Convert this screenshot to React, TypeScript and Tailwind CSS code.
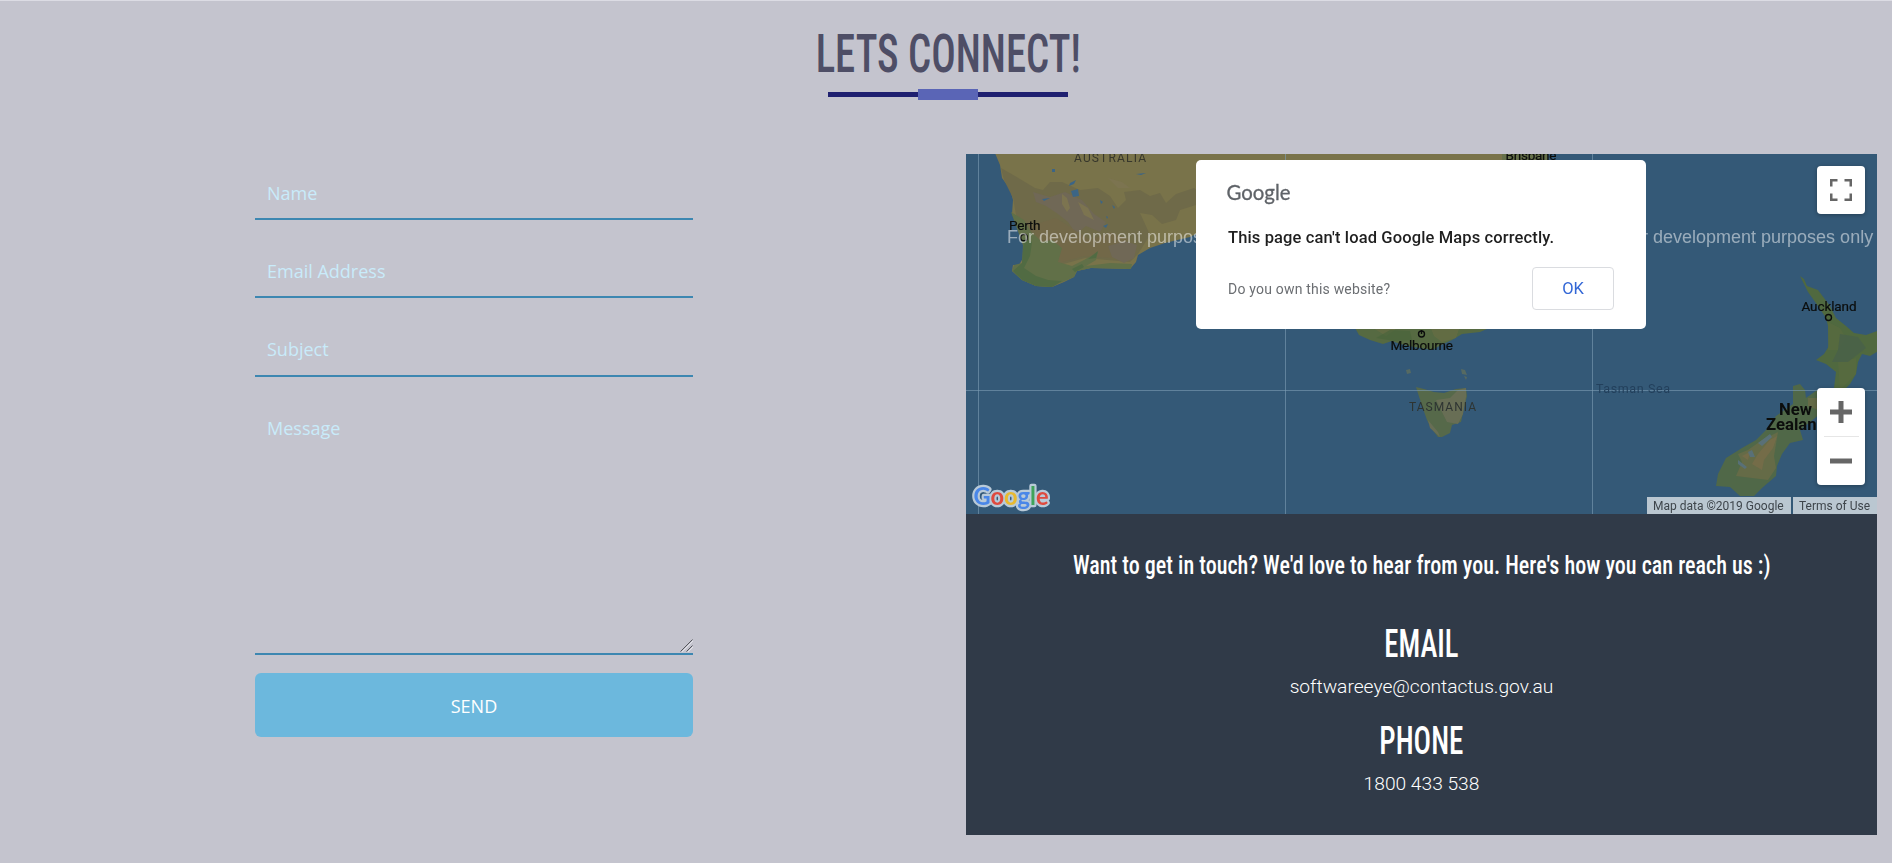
import type { ReactNode } from 'react';

const fieldClass =
  'block w-full border-0 border-b-2 border-[#3d87b1] bg-transparent pl-3 font-["Open_Sans",sans-serif] text-[18px] text-[#c9ebfa] outline-none placeholder:text-[#c9ebfa] placeholder:opacity-100';

function Header() {
  return (
    <header className="flex flex-col items-center pt-5">
      <h1 className='flex h-[66px] scale-x-[0.748] items-center whitespace-nowrap font-["Roboto_Condensed",Roboto,sans-serif] text-[54.5px] font-medium text-[#4e4e66]'>
        LETS CONNECT!
      </h1>
      <div className="mt-[2px] flex h-[11px] w-60 items-center">
        <div className="h-[5px] flex-1 bg-[#1f2070]" />
        <div className="h-[11px] w-[60px] bg-[#5a65b6]" />
        <div className="h-[5px] flex-1 bg-[#1f2070]" />
      </div>
    </header>
  );
}

function ContactForm() {
  return (
    <form className="mx-auto flex w-[438px] flex-col pt-3" onSubmit={(e) => e.preventDefault()}>
      <div className="flex flex-col gap-[24.3px]">
        <input className={`${fieldClass} h-[54px] pt-[2px]`} placeholder="Name" />
        <input className={`${fieldClass} h-[54px] pt-[2px]`} placeholder="Email Address" />
        <input className={`${fieldClass} h-[54px] pt-px`} placeholder="Subject" />
        <div className="relative">
          <textarea className={`${fieldClass} h-[254px] resize-none pt-[14px] leading-[27px]`} placeholder="Message" />
          <svg width="13" height="13" viewBox="0 0 13 13" className="absolute right-0 bottom-[3px]">
            <path d="M1.5 13.5L13.5 1.5M7.5 13.5L13.5 7.5" stroke="#e4e4ea" strokeWidth="1" />
            <path d="M0.5 12.5L12.5 0.5M6.5 12.5L12.5 6.5" stroke="#55565c" strokeWidth="1" />
          </svg>
        </div>
      </div>
      <button className='mt-[18px] h-16 rounded-md bg-[#6cb8dd] pt-[3px] font-["Open_Sans",sans-serif] text-[18px] text-white'>
        SEND
      </button>
    </form>
  );
}

function MapCanvas() {
  return (
    <svg viewBox="966 154 911 360" className="block h-[360px] w-[911px]" fontFamily="Roboto, sans-serif">
      <defs>
        <filter id="terrain" x="-5%" y="-5%" width="110%" height="110%" colorInterpolationFilters="sRGB">
          <feGaussianBlur stdDeviation="0.7" />
        </filter>
      </defs>
      <rect x="966" y="154" width="911" height="360" fill="#345977" />

      <g filter="url(#terrain)">
        {/* Mainland Australia */}
        <path
          fill="#79734a"
          d="M992 146L1000 165L1002 178L1010 189L1013 200L1012 214L1017 224L1020 231L1023 245L1023 258L1019 265L1013 265L1012 271L1022 280L1036 286L1052 287L1064 282L1074 277L1077 271L1091 268L1130 269L1136 262L1138 255L1150 248L1165 243L1190 237L1215 225L1550 225L1552 170L1540 146Z"
        />
        <path
          fill="#6f6a49"
          d="M1001 168L1015 176L1035 188L1043 190L1050 182L1062 182L1080 190L1098 188L1110 196L1118 208L1126 200L1124 192L1140 190L1150 196L1160 193L1166 203L1176 194L1194 188L1200 193L1196 205L1180 210L1176 220L1162 224L1152 215L1140 213L1150 235L1138 254L1130 262L1085 258L1060 265L1045 250L1026 232L1017 220L1013 198L1004 180Z"
        />
        <path
          fill="#706856"
          d="M1033 192L1050 197L1065 192L1082 200L1094 214L1106 222L1100 232L1086 226L1076 234L1068 222L1058 214L1046 206L1036 202ZM1108 246L1122 240L1137 245L1134 258L1124 263L1112 257Z"
        />
        <path fill="#7c7450" d="M1062 194L1067 198L1070 208L1067 212L1062 204ZM1078 202L1088 208L1094 220L1084 215ZM1108 178L1122 182L1130 188L1118 188Z" />
        <path fill="#736849" opacity="0.8" d="M1030 226L1056 218L1090 240L1110 232L1130 240L1108 246L1112 258L1084 256L1062 262L1046 248Z" />
        <path
          fill="#617048"
          d="M1011 212L1024 220L1031 232L1042 242L1052 240L1062 248L1058 262L1072 266L1084 260L1098 252L1096 260L1086 266L1110 263L1132 264L1131 269L1091 268L1077 271L1074 277L1060 283L1052 287L1036 286L1022 280L1012 271L1014 265L1022 263L1023 245Z"
        />
        <path
          fill="#516b43"
          d="M1024 238L1032 242L1030 256L1024 268L1036 276L1048 280L1062 281L1052 287L1036 286L1022 280L1013 271L1022 263ZM1088 259L1098 251L1096 258ZM1072 269L1082 264L1084 267L1075 272Z"
        />
        <path
          fill="#3c6585"
          d="M1052 169h3v3h-3zM1070 183l6-3-2 4-5 2zM1071 191l7-2 1 7-6 1zM1042 199l8-1-6 3zM1100 200l3 2-2 2zM1106 216l2 1-1 2zM1103 226l5-2-2 4zM1112 205l3 2-1 2zM1136 174l10-1-5 2z"
        />
        <rect x="1502" y="146" width="46" height="20" fill="#65704a" />

        {/* Victoria coast */}
        <path
          fill="#566a42"
          d="M1354 326L1359 335L1370 340L1383 344L1392 341L1400 344L1414 347L1432 350L1441 345L1452 340L1462 334L1480 332L1494 326Z"
        />
        <path fill="#686e45" opacity="0.7" d="M1430 326L1460 326L1456 338L1442 342L1434 336ZM1370 326L1400 326L1386 336Z" />
        <path fill="#4a653c" opacity="0.7" d="M1376 338L1390 330L1410 331L1412 340L1394 341Z" />

        {/* Tasmania and Bass Strait islands */}
        <path
          fill="#56694a"
          d="M1416 387L1424 389L1434 392L1444 393L1456 389L1466 388L1467 396L1464 408L1461 422L1452 425L1450 433L1442 437L1438 437L1431 428L1427 420L1422 406Z"
        />
        <path fill="#686e55" d="M1436 400L1450 398L1458 390L1466 388L1466 397L1463 414L1458 424L1447 422L1442 412ZM1428 420L1438 432L1440 437L1430 428Z" />
        <path fill="#566a62" d="M1406 370l4-1 1 4-4 1zM1461 369l4 1 2 5-5-1zM1464 376l3 1-1 3z" />

        {/* New Zealand */}
        <path
          fill="#50693f"
          d="M1800 276L1804 279L1807 286L1818 290L1824 298L1830 306L1836 318L1846 326L1854 333L1866 335L1880 330L1880 350L1870 356L1862 354L1858 362L1856 374L1850 384L1840 394L1834 388L1836 372L1826 364L1816 360L1824 354L1829 346L1828 326L1826 318L1818 306L1808 292Z"
        />
        <path fill="#586a40" opacity="0.8" d="M1828 322L1840 328L1846 338L1838 350L1828 350ZM1838 362L1856 358L1856 374L1840 390Z" />
        <path fill="#49604a" opacity="0.8" d="M1840 334L1858 337L1866 348L1848 362L1832 362L1838 350Z" />
        <path
          fill="#506848"
          d="M1793 386L1800 384L1805 390L1806 398L1817 390L1825 398L1820 414L1800 430L1803 440L1790 443L1782 454L1777 466L1776 476L1762 488L1754 496L1740 496L1730 487L1716 486L1718 474L1726 458L1742 448L1756 440L1766 430L1776 416L1793 404Z"
        />
        <path fill="#656b47" d="M1762 440L1778 432L1776 444L1774 456L1776 468L1768 480L1752 478L1736 476L1742 462L1738 454L1748 450ZM1808 398L1818 398L1818 410L1808 406Z" />
        <path fill="#7a6c49" opacity="0.7" d="M1770 440L1777 436L1773 448L1764 460L1762 470L1752 464L1758 454ZM1742 456L1750 452L1748 460Z" />
        <path fill="#58717c" opacity="0.9" d="M1758 443L1770 434L1772 437L1762 446ZM1748 452L1752 450L1755 457L1750 457ZM1738 460L1747 467L1745 469L1738 464Z" />
      </g>

      {/* Graticule */}
      <path d="M978.5 154V514M1285.5 154V514M1592.5 154V514M966 390.5H1877" fill="none" stroke="#7f9fb5" strokeOpacity="0.6" />

      {/* Place labels */}
      <g fontSize="12" fill="#37372c">
        <text x="1074" y="162" textLength="72">AUSTRALIA</text>
        <text x="1409" y="411" textLength="67" fill="#2e3432">TASMANIA</text>
      </g>
      <text x="1596" y="393" fontSize="12.5" textLength="74" fill="#23405c">Tasman Sea</text>
      <g fontSize="13.5" fill="#0b0d0c" stroke="#0b0d0c" strokeWidth="0.2">
        <text x="1009" y="230" textLength="31.5">Perth</text>
        <text x="1505.5" y="159.5" textLength="51">Brisbane</text>
        <text x="1390.5" y="350" textLength="62.5">Melbourne</text>
        <text x="1801.5" y="311" textLength="55">Auckland</text>
      </g>
      <g fontSize="16" fontWeight="700" fill="#0b0d0c">
        <text x="1779" y="415" textLength="33" lengthAdjust="spacingAndGlyphs">New</text>
        <text x="1766" y="430" textLength="60" lengthAdjust="spacingAndGlyphs">Zealand</text>
      </g>
      <g fill="none" stroke="#0b0d0c" strokeWidth="1.4">
        <circle cx="1024" cy="237.5" r="3.3" />
        <circle cx="1421.5" cy="334" r="3" />
        <path d="M1421.5 330v4" />
        <circle cx="1828.5" cy="317.5" r="3" />
      </g>

      {/* Watermark */}
      <g fontFamily="Liberation Sans, Arial, sans-serif" fontSize="18" fill="#ffffff" fillOpacity="0.5">
        <text x="1007" y="243">For development purposes only</text>
        <text x="1621" y="243">For development purposes only</text>
      </g>
    </svg>
  );
}

function MapOverlay({ className, children }: { className: string; children: ReactNode }) {
  return <div className={`absolute ${className}`}>{children}</div>;
}

function MapDialog() {
  return (
    <div className="h-[169px] w-[450px] rounded-[5px] bg-white px-8 font-[Roboto,sans-serif]">
      <div className="flex h-[66px] items-center">
        <svg width="68" height="30" viewBox="0 0 68 30" className="-ml-1">
          <text x="2.5" y="21.5" fontFamily="Lato, sans-serif" fontSize="20.5" fill="#5f6368" stroke="#5f6368" strokeWidth="0.3" textLength="64" lengthAdjust="spacingAndGlyphs">
            Google
          </text>
        </svg>
      </div>
      <p className="h-6 whitespace-nowrap text-[16.5px] leading-6 font-medium tracking-[0.13px] text-[#1f1f1f]">
        This page can't load Google Maps correctly.
      </p>
      <div className="mt-[17px] flex h-[43px] items-center justify-between">
        <span className="pt-[2px] text-[14px] tracking-[0.2px] text-[#6b6e72]">Do you own this website?</span>
        <button className="h-[43px] w-[82px] rounded border border-[#dadce0] pt-px text-[16.5px] text-[#3367d6]">OK</button>
      </div>
    </div>
  );
}

function GoogleLogo() {
  return (
    <svg width="84" height="32" viewBox="0 0 84 32" className="block">
      <g fontFamily="Lato, sans-serif" fontSize="24.5" fontWeight="700">
        <text x="4.5" y="23.5" textLength="75" lengthAdjust="spacingAndGlyphs" fill="#b9cad8" stroke="#b9cad8" strokeWidth="4.5" strokeLinejoin="round">
          Google
        </text>
        <text x="4.5" y="23.5" textLength="75" lengthAdjust="spacingAndGlyphs">
          <tspan fill="#4a87e8">G</tspan>
          <tspan fill="#df4a3e">o</tspan>
          <tspan fill="#e8b92f">o</tspan>
          <tspan fill="#4a87e8">g</tspan>
          <tspan fill="#3fa35a">l</tspan>
          <tspan fill="#df4a3e">e</tspan>
        </text>
      </g>
    </svg>
  );
}

function MapPanel() {
  return (
    <div className="relative h-[360px] w-full overflow-hidden">
      <MapCanvas />
      <MapOverlay className="top-[6px] left-[230px]">
        <MapDialog />
      </MapOverlay>
      <MapOverlay className="top-3 right-3">
        <button className="flex size-12 items-center justify-center rounded-sm bg-white shadow-[0_1px_4px_rgba(0,0,0,0.3)]">
          <svg width="22" height="22" viewBox="0 0 22 22" className="block">
            <path d="M1.25 7.5V1.25H7.5M14.5 1.25H20.75V7.5M20.75 14.5V20.75H14.5M7.5 20.75H1.25V14.5" fill="none" stroke="#666" strokeWidth="2.5" />
          </svg>
        </button>
      </MapOverlay>
      <MapOverlay className="right-3 bottom-[29px]">
        <div className="flex h-[97px] w-12 flex-col items-center rounded-sm bg-white shadow-[0_1px_4px_rgba(0,0,0,0.3)]">
          <button className="flex h-12 w-full items-center justify-center">
            <svg width="22" height="22" viewBox="0 0 22 22" className="block">
              <path d="M0 11H22M11 0V22" stroke="#666" strokeWidth="5" />
            </svg>
          </button>
          <div className="h-px w-[35px] bg-[#e6e6e6]" />
          <button className="flex h-12 w-full items-center justify-center">
            <svg width="22" height="22" viewBox="0 0 22 22" className="block">
              <path d="M0 11H22" stroke="#666" strokeWidth="5" />
            </svg>
          </button>
        </div>
      </MapOverlay>
      <MapOverlay className="bottom-[1px] left-[3px]">
        <GoogleLogo />
      </MapOverlay>
      <MapOverlay className="right-0 bottom-0">
        <div className="flex h-[17px] gap-[2px] font-[Roboto,sans-serif] text-[12px] leading-[18px] whitespace-nowrap text-[#3e454b]">
          <span className="w-36 bg-[#bac7d1] pl-[6px]">Map data ©2019 Google</span>
          <span className="w-[84px] bg-[#bac7d1] pl-[6px]">Terms of Use</span>
        </div>
      </MapOverlay>
    </div>
  );
}

function ContactDetails() {
  return (
    <div className="flex h-[321px] flex-col items-center bg-[#303a48] pt-[25px] font-[Roboto,sans-serif] text-white">
      <p className='h-[52px] scale-x-[0.849] whitespace-nowrap font-["Roboto_Condensed",Roboto,sans-serif] text-[26px] leading-[52px] font-medium'>
        Want to get in touch? We'd love to hear from you. Here's how you can reach us :)
      </p>
      <h2 className='mt-[27px] h-[53px] scale-x-[0.735] font-["Roboto_Condensed",Roboto,sans-serif] text-[39px] leading-[53px] font-medium'>
        EMAIL
      </h2>
      <p className="h-8 text-[19.2px] leading-8 font-light">softwareeye@contactus.gov.au</p>
      <h2 className='mt-3 h-[53px] scale-x-[0.745] font-["Roboto_Condensed",Roboto,sans-serif] text-[39px] leading-[53px] font-medium'>
        PHONE
      </h2>
      <p className="h-8 text-[19.2px] leading-8 font-light">1800 433 538</p>
    </div>
  );
}

export default function App() {
  return (
    <div className="h-[863px] overflow-hidden bg-[#c4c4ce]">
      <div className="h-full w-[1896px] border-t border-[#dcdce4]">
        <Header />
        <main className="mt-[54px] grid grid-cols-2">
          <ContactForm />
          <section className="mr-[19px] ml-[18px]">
            <MapPanel />
            <ContactDetails />
          </section>
        </main>
      </div>
    </div>
  );
}
